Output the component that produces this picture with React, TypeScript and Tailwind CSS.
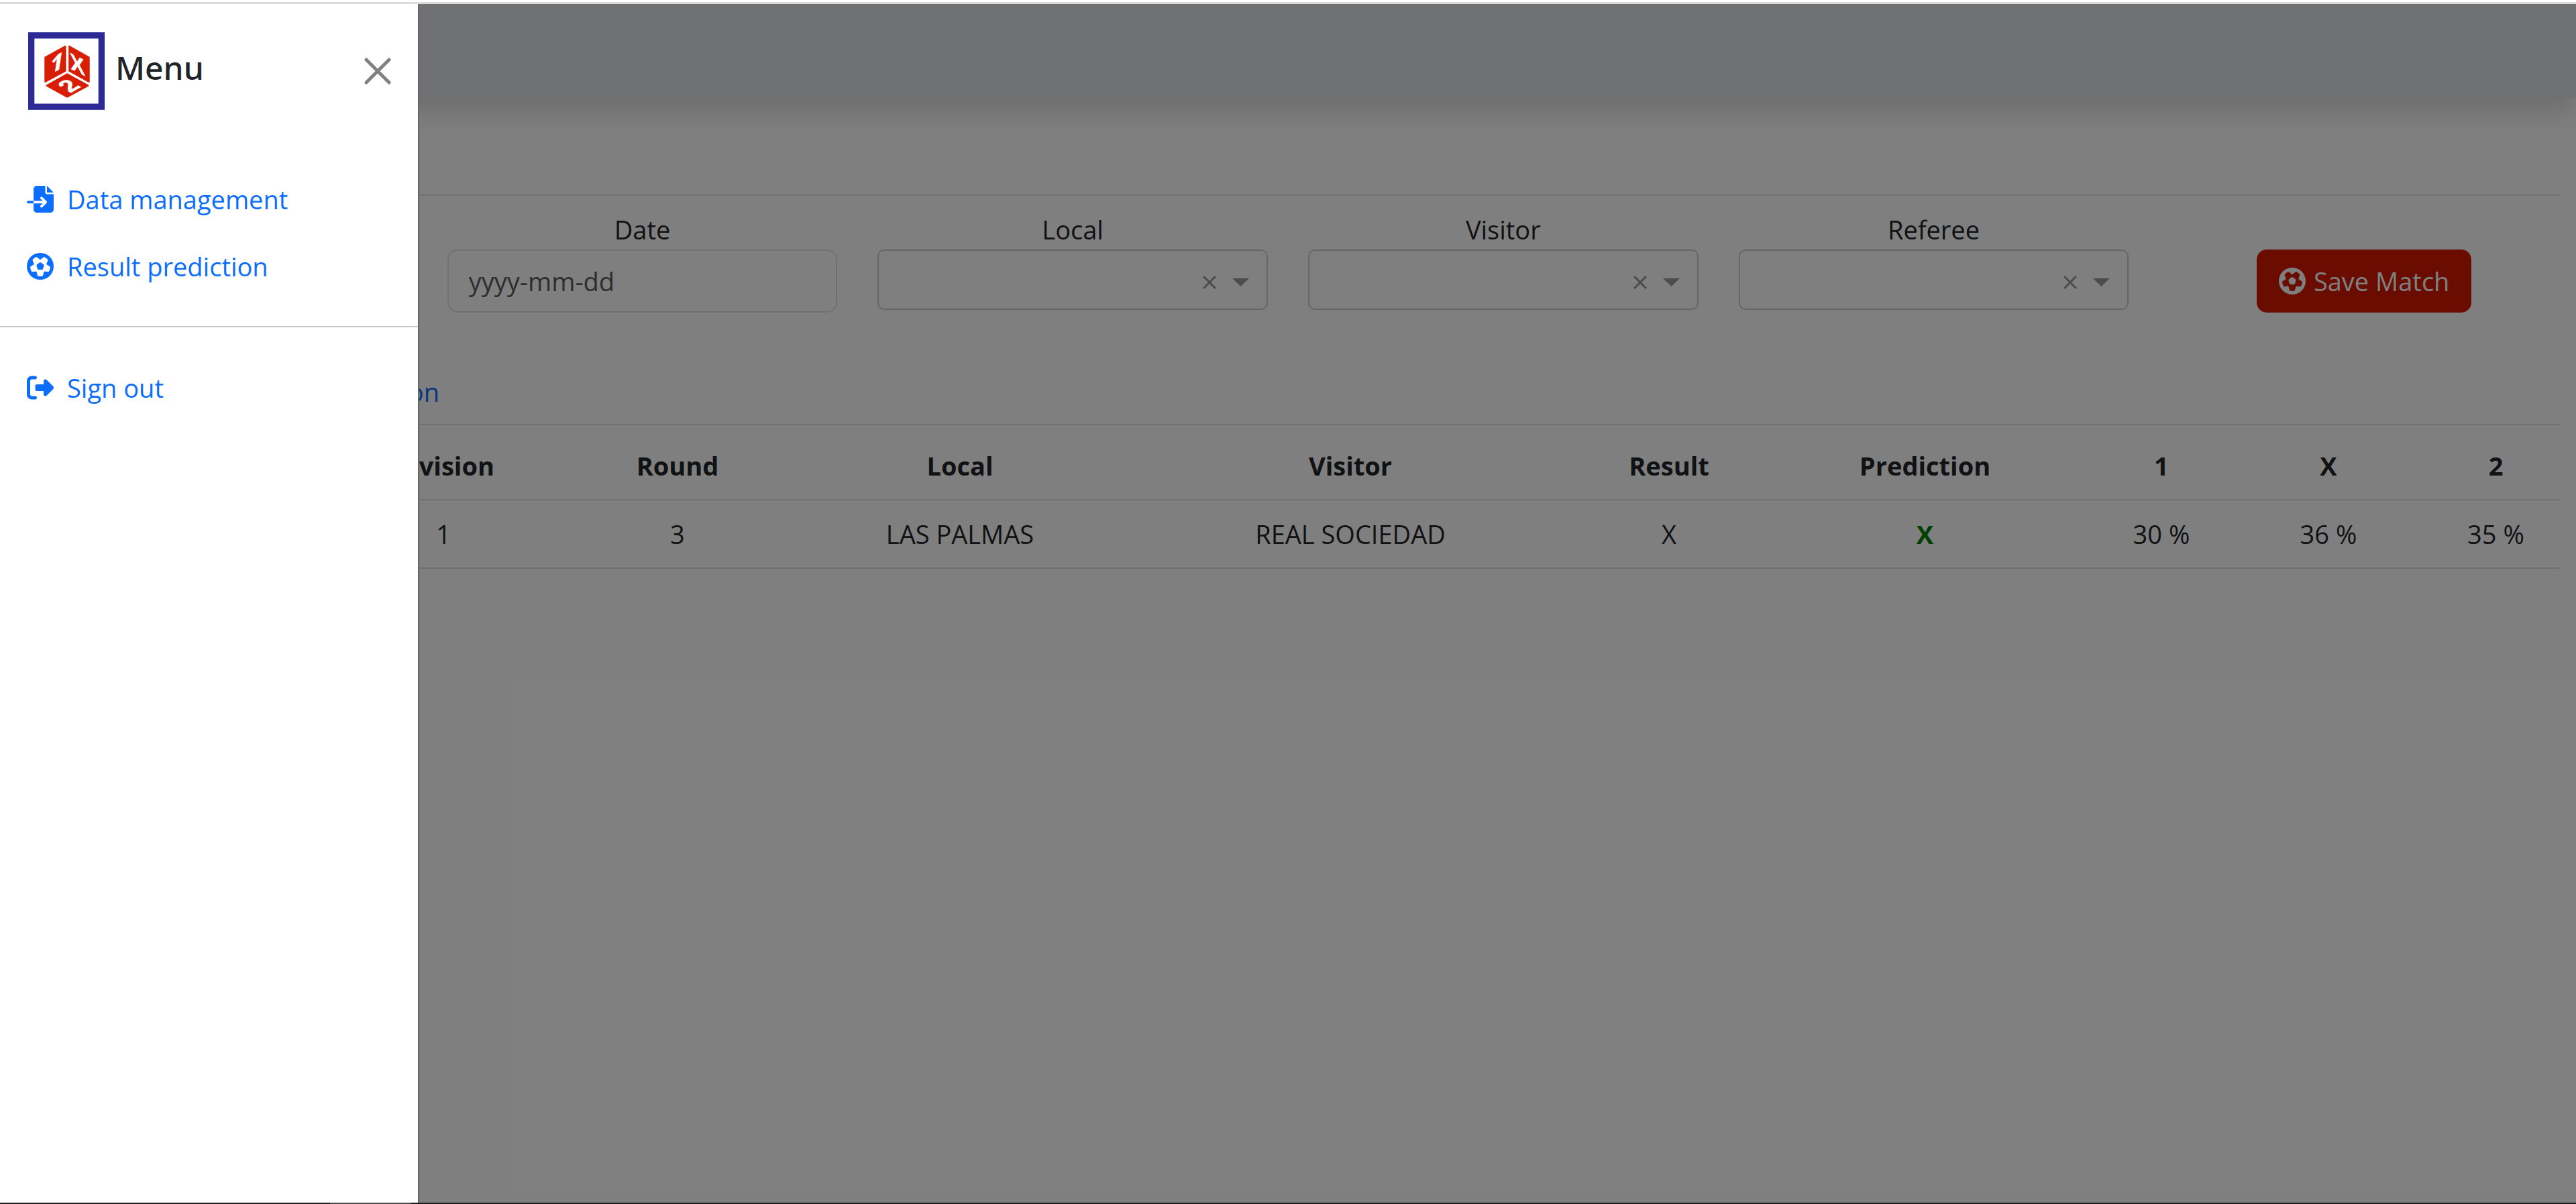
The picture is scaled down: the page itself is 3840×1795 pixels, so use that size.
import type { ReactNode } from "react";
import { FaFileImport, FaFutbol, FaRightFromBracket } from "react-icons/fa6";

function DiceLogo() {
  return (
    <svg viewBox="18 18 343 348" className="h-[116px] w-[114px]" role="img" aria-label="1X2">
      <rect x="18" y="18" width="343" height="348" fill="#2d2a96" />
      <rect x="46" y="46" width="287" height="292" fill="#fff" />
      <g fill="#d81e05" stroke="#d81e05" strokeWidth="8" strokeLinejoin="round">
        <path d="M95 131 184 82V191L95 239Z" />
        <path d="M203 82 290 131V239L203 191Z" />
        <path d="M193 206 286 257 193 307 102 257Z" />
      </g>
      <g
        fill="#fff"
        stroke="#fff"
        strokeWidth="2"
        fontFamily="'Liberation Sans', Arial, sans-serif"
        fontWeight="700"
        fontSize="106"
        textAnchor="middle"
      >
        <text transform="matrix(1 -0.5 -0.15 1 142 192)" fontFamily="'Open Sans', sans-serif">1</text>
        <text transform="matrix(0.9 0.45 0.1 1 242 198)">X</text>
        <text transform="matrix(0.87 -0.5 0.87 0.5 232 276)">2</text>
      </g>
    </svg>
  );
}

function NavLink({ icon, children }: { icon: ReactNode; children: ReactNode }) {
  return (
    <a href="#" className="flex items-center gap-5 px-10 py-5 text-[#0d6efd]">
      {icon}
      {children}
    </a>
  );
}

function Drawer() {
  return (
    <aside className="absolute inset-y-0 left-0 w-[625px] border-r-2 border-[#666666] bg-white">
      <div className="flex items-start justify-between pt-[42px] pr-10 pl-[42px]">
        <div className="flex items-start gap-4">
          <DiceLogo />
          <h5 className="pt-5 font-['Noto_Sans',sans-serif] text-[48px] leading-[66px] font-medium">Menu</h5>
        </div>
        <button type="button" aria-label="Close" className="mt-[38px] text-[#808080]">
          <svg viewBox="0 0 40 40" className="size-10" fill="none" stroke="currentColor" strokeWidth="5" strokeLinecap="round">
            <path d="M3 3 37 37M37 3 3 37" />
          </svg>
        </button>
      </div>
      <nav className="mt-[83px]">
        <NavLink icon={<FaFileImport className="size-10" />}>Data management</NavLink>
        <NavLink icon={<FaFutbol className="size-10" />}>Result prediction</NavLink>
        <hr className="mt-[39px] mb-10 border-t-2 border-[#c7c8c9]" />
        <NavLink icon={<FaRightFromBracket className="size-10" />}>Sign out</NavLink>
      </nav>
    </aside>
  );
}

function Field({ id, label, children }: { id: string; label: string; children: ReactNode }) {
  return (
    <div className="flex flex-col">
      <label htmlFor={id} className="text-center">
        {label}
      </label>
      {children}
    </div>
  );
}

function TextField({ id, label, placeholder }: { id: string; label: string; placeholder: string }) {
  return (
    <Field id={id} label={label}>
      <input
        id={id}
        type="text"
        placeholder={placeholder}
        className="h-[94px] w-full rounded-[15px] border-2 border-[#dee2e6] bg-white px-[30px] placeholder:text-[#595c5f]"
      />
    </Field>
  );
}

function SelectField({ id, label }: { id: string; label: string }) {
  return (
    <Field id={id} label={label}>
      <div className="relative">
        <select
          id={id}
          className="block h-[90px] w-full appearance-none rounded-[10px] border-2 border-[#cccccc] bg-white pl-[25px]"
        />
        <div className="absolute inset-y-0 right-7 flex items-center gap-6 pt-2 text-[#999999]">
          <button type="button" aria-label={`Clear ${label}`}>
            <svg viewBox="0 0 20 20" className="size-5" stroke="currentColor" strokeWidth="3">
              <path d="M1 1 19 19M19 1 1 19" />
            </svg>
          </button>
          <svg viewBox="0 0 25 12" className="h-3 w-[25px]" fill="currentColor">
            <path d="M0 0H25L12.5 12Z" />
          </svg>
        </div>
      </div>
    </Field>
  );
}

const columns = [
  { title: "Date", share: 478, value: "2023-08-25" },
  { title: "Division", share: 316, value: "1" },
  { title: "Round", share: 382, value: "3" },
  { title: "Local", share: 460, value: "LAS PALMAS" },
  { title: "Visitor", share: 704, value: "REAL SOCIEDAD" },
  { title: "Result", share: 246, value: "X" },
  { title: "Prediction", share: 517, value: "X" },
  { title: "1", share: 188, value: "30 %" },
  { title: "X", share: 310, value: "36 %" },
  { title: "2", share: 189, value: "35 %" },
];
const totalShare = columns.reduce((sum, c) => sum + c.share, 0);

function MatchTable() {
  return (
    <table className="w-full table-fixed border-collapse text-center">
      <colgroup>
        {columns.map((c) => (
          <col key={c.title} style={{ width: `${(c.share / totalShare) * 100}%` }} />
        ))}
      </colgroup>
      <thead>
        <tr className="border-b-2 border-[#dee2e6]">
          {columns.map((c) => (
            <th key={c.title} scope="col" className="py-5 font-bold">
              {c.title}
            </th>
          ))}
        </tr>
      </thead>
      <tbody>
        <tr className="border-b-2 border-[#dee2e6]">
          {columns.map((c) => (
            <td
              key={c.title}
              className={c.title === "Prediction" ? "py-5 font-bold text-[#008000]" : "py-5"}
            >
              {c.value}
            </td>
          ))}
        </tr>
      </tbody>
    </table>
  );
}

function MatchPage() {
  return (
    <div className="h-full bg-white">
      <header className="h-[140px] bg-[#dee2e6] shadow-[0_20px_40px_rgba(0,0,0,0.15)]" />
      <main className="px-[25px] pt-36">
        <hr className="border-t-2 border-[#dee2e6]" />
        <form className="mt-5 grid grid-cols-6 items-start gap-x-[60px]">
          <TextField id="season" label="Season" placeholder="" />
          <TextField id="date" label="Date" placeholder="yyyy-mm-dd" />
          <SelectField id="local" label="Local" />
          <SelectField id="visitor" label="Visitor" />
          <SelectField id="referee" label="Referee" />
          <button
            type="button"
            className="mt-[60px] flex h-[94px] w-80 items-center justify-center gap-3 justify-self-center rounded-[15px] bg-[#d51900] text-white"
          >
            <FaFutbol className="size-10" />
            Save Match
          </button>
        </form>
        <div className="mt-[88px] w-[630px] text-right">
          <a href="#" className="text-[#0d6efd]">
            Match prediction
          </a>
        </div>
        <hr className="mt-[18px] mb-[10px] border-t-2 border-[#dee2e6]" />
        <MatchTable />
      </main>
    </div>
  );
}

export default function App() {
  return (
    <div className="flex h-screen flex-col overflow-hidden font-['Open_Sans',sans-serif] text-[38px] leading-[60px] text-[#212529]">
      <div className="h-1.5 shrink-0 border-b-3 border-[#dcdcdc] bg-white" />
      <div className="relative min-h-0 flex-1 overflow-hidden">
        <MatchPage />
        <div className="absolute inset-0 bg-black/50" />
        <Drawer />
      </div>
      <div className="flex h-0.5 shrink-0 bg-[#1e1e1e]">
        <div className="ml-[492px] w-[121px] bg-[#4a4a4a]" />
      </div>
    </div>
  );
}
